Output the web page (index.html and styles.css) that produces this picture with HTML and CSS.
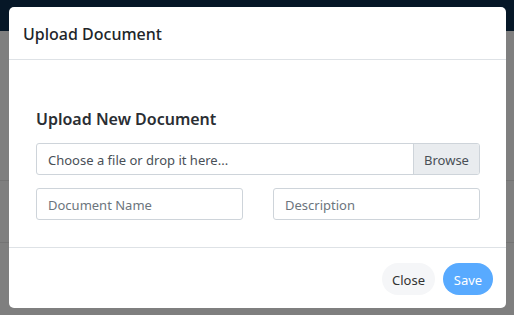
FILE: index.html
```html
<!DOCTYPE html>
<html>
<head>
<meta charset="utf-8">
<link rel="stylesheet" href="styles.css">
</head>
<body>
<div class="page">
  <div class="navbar"></div>
  <div class="backdrop">
    <div class="bg-line bg-line-1"></div>
    <div class="bg-line bg-line-2"></div>
  </div>
  <div class="modal">
    <div class="modal-header">
      <h5 class="modal-title">Upload Document</h5>
    </div>
    <div class="modal-body">
      <h4 class="section-title">Upload New Document</h4>
      <div class="file-input">
        <span class="file-label">Choose a file or drop it here...</span>
        <span class="browse">Browse</span>
      </div>
      <div class="input-row">
        <input class="text-input" type="text" placeholder="Document Name">
        <input class="text-input" type="text" placeholder="Description">
      </div>
    </div>
    <div class="modal-footer">
      <button class="btn btn-close">Close</button>
      <button class="btn btn-save">Save</button>
    </div>
  </div>
</div>
</body>
</html>
```
FILE: styles.css
```css
* { box-sizing: border-box; }
html, body { margin: 0; padding: 0; }
body {
  width: 514px;
  height: 315px;
  overflow: hidden;
  font-family: "Noto Sans", "Open Sans", sans-serif;
  background: #7f7f7f;
}
.page { position: relative; width: 514px; height: 315px; }
.navbar { height: 31px; background: #061727; }
.backdrop { position: relative; height: 284px; background: #7f7f7f; }
.bg-line { position: absolute; left: 0; right: 0; height: 1px; background: #747474; }
.bg-line-1 { top: 149px; }
.bg-line-2 { top: 211px; }

.modal {
  position: absolute;
  left: 9px;
  top: 7px;
  width: 497px;
  height: 301px;
  background: #fff;
  border-radius: 5px;
  display: flex;
  flex-direction: column;
}
.modal-header {
  height: 53px;
  padding: 0 14px;
  display: flex;
  align-items: center;
  border-bottom: 1px solid #dee2e6;
}
.modal-title {
  margin: 0;
  font-size: 16px;
  font-weight: 500;
  color: #212529;
  line-height: 24px;
  padding-top: 1px;
}
.modal-body {
  flex: 1;
  padding: 47px 26px 0 27px;
  border-bottom: 1px solid #dee2e6;
}
.section-title {
  margin: 0 0 12px;
  font-size: 16px;
  font-weight: 600;
  color: #2a2e33;
  line-height: 24px;
}
.file-input {
  height: 32px;
  display: flex;
  border: 1px solid #ced4da;
  border-radius: 3px;
  overflow: hidden;
}
.file-label {
  flex: 1;
  padding: 1px 11px 0;
  font-size: 13px;
  line-height: 30px;
  color: #495057;
}
.browse {
  width: 66px;
  padding-top: 1px;
  background: #e9ecef;
  border-left: 1px solid #ced4da;
  font-size: 13px;
  line-height: 30px;
  color: #495057;
  text-align: center;
}
.input-row {
  margin-top: 13px;
  display: flex;
  justify-content: space-between;
}
.text-input {
  width: 207px;
  height: 32px;
  border: 1px solid #ced4da;
  border-radius: 3px;
  padding: 2px 11px 0;
  font-family: "Noto Sans", "Open Sans", sans-serif;
  font-size: 13px;
  color: #495057;
  outline: none;
}
.text-input::placeholder { color: #6c757d; }
.modal-footer {
  height: 60px;
  display: flex;
  justify-content: flex-end;
  align-items: flex-start;
  padding: 15px 13px 0 0;
  gap: 8px;
}
.btn {
  height: 32px;
  border: none;
  border-radius: 16px;
  font-family: "Noto Sans", "Open Sans", sans-serif;
  font-size: 13px;
  padding: 1px 0 0;
}
.btn-close { width: 53px; background: #f5f6f8; color: #333; }
.btn-save { width: 50px; background: #58aaff; color: #fff; }
```
